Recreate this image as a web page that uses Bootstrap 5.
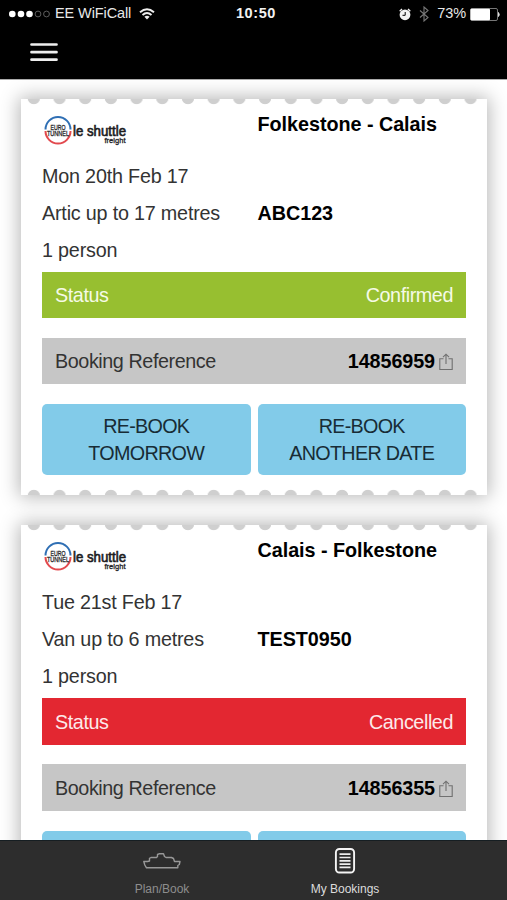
<!DOCTYPE html>
<html lang="en">
<head>
<meta charset="utf-8">
<meta name="viewport" content="width=device-width, initial-scale=1">
<title>My Bookings</title>
<link rel="stylesheet" href="https://cdn.jsdelivr.net/npm/bootstrap@5.3.0/dist/css/bootstrap.min.css">
<style>
body{font-family:"Liberation Sans",Arial,sans-serif;font-size:19.75px;letter-spacing:-.2px;color:#333}
svg{display:block;flex:none}
.topbar{height:79px;background:#000}
.statusline{height:28px;font-size:14.5px;letter-spacing:-.1px;padding:0 7px 0 9px;color:#e8e8e8}
.statusline>div{flex:1 1 0}
.statusline>.clock{flex:none;font-weight:700;letter-spacing:.6px;color:#f2f2f2;padding-left:3px}
.menu-btn{margin:14px 0 0 30px}
.screen{border-top:1px solid #aaa;background:#fff;padding:18.5px 20px 0 21px}
.ticket{position:relative;height:396.5px;margin-bottom:30px;padding:7px 21px 0;background:#fff;box-shadow:0 0 18px 2px rgba(0,0,0,.29)}
.ticket::before,.ticket::after{content:"";position:absolute;left:0;right:0;height:6px;background:radial-gradient(circle at 50% -1px,#cfcfcf 5.8px,transparent 6.6px) 0 0/25.7px 6px repeat-x}
.ticket::before{top:0}
.ticket::after{bottom:0;transform:scaleY(-1)}
.pair{display:grid;grid-template-columns:1fr 1fr;column-gap:7px;line-height:37px}
.pair-head{height:52px}
.person-row{margin-bottom:3px}
.strong-ink{font-weight:700;color:#000;letter-spacing:-.03px}
.brandmark{margin:10px 0 0 2px}
.strip{height:46.5px;padding:3px 13px 0;letter-spacing:-.42px}
.strip .strong-ink{letter-spacing:-.08px}
.strip-green{background:#97bf30;color:#f5fae6}
.strip-red{background:#e32731;color:#fdeaea}
.strip-grey{background:#c6c6c6}
.strip+.strip{margin-top:19.5px}
.actions{margin-top:20px}
.btn-sky,.btn-sky:hover{background:#82cbe9;color:#182c35;border:0;border-radius:5px;height:70.5px;padding:1px 0 0;font-size:inherit;line-height:27px;letter-spacing:-.7px}
.tabs{height:60px;background:#2d2d2d;border-top:1px solid #161e22;font-size:12px;letter-spacing:0}
.tab{width:183px;color:#8d8d8d;line-height:16px}
.tab.current{color:#dcdcdc}
.tab svg{height:28px;margin:6px 0 6px}
</style>
<script src="https://cdn.jsdelivr.net/npm/bootstrap@5.3.0/dist/js/bootstrap.bundle.min.js"></script>
</head>
<body>
<svg width="0" height="0" class="position-absolute">
<defs>
<symbol id="brand" viewBox="0 0 84 30">
<path d="M1.500 13.500A12.500 12.500 0 0 1 26.500 13.500" fill="none" stroke="#2f6fb4" stroke-width="2"/>
<path d="M1.500 15A12.500 12.500 0 0 0 26.500 15" fill="none" stroke="#e2494e" stroke-width="2"/>
<g font-family="Liberation Sans,Arial,sans-serif" fill="#1d1d1f" stroke="#1d1d1f" letter-spacing="0">
<text x="6.500" y="13.500" font-size="7.500" stroke-width=".3" textLength="15" lengthAdjust="spacingAndGlyphs">EURO</text>
<text x="3" y="19.500" font-size="7.500" stroke-width=".3" textLength="22" lengthAdjust="spacingAndGlyphs">TUNNEL</text>
<text x="29" y="19.500" font-size="15" stroke-width=".7" textLength="53" lengthAdjust="spacingAndGlyphs">le shuttle</text>
<text x="60.500" y="26.500" font-size="8" stroke-width=".3" textLength="21" lengthAdjust="spacingAndGlyphs">freight</text>
</g>
</symbol>
<symbol id="share" viewBox="0 0 14 18">
<path d="M4.500 5.800H.8V16.500H13.200V5.800H9.500M7 11V1.500M4 4.200L7 1.200L10 4.200" fill="none" stroke="#707070" stroke-width="1.100"/>
</symbol>
</defs>
</svg>
<div class="vh-100 d-flex flex-column overflow-hidden">
<header class="topbar flex-shrink-0">
<div class="statusline d-flex align-items-center">
<div class="d-flex align-items-center">
<svg width="42" height="10" viewBox="0 0 42 10"><g fill="#fff"><circle cx="3.300" cy="5" r="3.300"/><circle cx="12" cy="5" r="3.300"/><circle cx="20.500" cy="5" r="3.300"/></g><g fill="none" stroke="#666" stroke-width=".9"><circle cx="29" cy="5" r="2.900"/><circle cx="37.500" cy="5" r="2.900"/></g></svg>
<span class="ms-1">EE WiFiCall</span>
<svg class="ms-2" width="16" height="12" viewBox="0 0 16 12"><g fill="none" stroke="#eee" stroke-width="1.900"><path d="M1 4.300Q8-2 15 4.300"/><path d="M3.500 7Q8 3 12.500 7"/></g><path d="M5.400 8.800Q8 6.800 10.600 8.800L8 11.600Z" fill="#eee"/></svg>
</div>
<div class="clock">10:50</div>
<div class="d-flex align-items-center justify-content-end">
<svg width="14" height="13" viewBox="0 0 14 13"><circle cx="8" cy="6.800" r="5.400" fill="#f2f2f2"/><path d="M2.700 3.200L5 1M13.300 3.200L11 1" stroke="#f2f2f2" stroke-width="1.400"/><path d="M8.200 4V7.300H5.500" fill="none" stroke="#000" stroke-width="1"/></svg>
<svg class="mx-2" width="10" height="16" viewBox="0 0 10 16"><path d="M1 4.500L9 11.500L5 15V1L9 4.500L1 11.500" fill="none" stroke="#777" stroke-width="1.100"/></svg>
<span>73%</span>
<svg class="ms-1" width="30" height="13" viewBox="0 0 30 13"><rect x=".5" y=".5" width="27" height="12" rx="1.500" fill="none" stroke="#777"/><rect x=".5" y=".8" width="19.500" height="11.400" rx="1" fill="#fff"/><path d="M28.500 4.500Q30 6.500 28.500 8.500Z" fill="#ddd" stroke="#ddd"/></svg>
</div>
</div>
<svg class="menu-btn" width="28" height="20" viewBox="0 0 28 20"><path d="M1.500 2.500H26.500M1.500 10.200H26.500M1.500 17.700H26.500" stroke="#eee" stroke-width="2.700" stroke-linecap="round"/></svg>
</header>
<main class="screen flex-grow-1 overflow-hidden">
<article class="ticket">
<div class="pair pair-head"><svg class="brandmark" width="84" height="30"><use href="#brand"/></svg><span class="strong-ink">Folkestone - Calais</span></div>
<div class="pair"><span>Mon 20th Feb 17</span></div>
<div class="pair"><span>Artic up to 17 metres</span><span class="strong-ink">ABC123</span></div>
<div class="pair person-row"><span>1 person</span></div>
<div class="strip strip-green d-flex align-items-center justify-content-between"><span>Status</span><span>Confirmed</span></div>
<div class="strip strip-grey d-flex align-items-center"><span class="me-auto">Booking Reference</span><span class="strong-ink">14856959</span><svg class="ms-1" width="14" height="18"><use href="#share"/></svg></div>
<div class="pair actions"><button class="btn btn-sky">RE-BOOK<br>TOMORROW</button><button class="btn btn-sky">RE-BOOK<br>ANOTHER DATE</button></div>
</article>
<article class="ticket">
<div class="pair pair-head"><svg class="brandmark" width="84" height="30"><use href="#brand"/></svg><span class="strong-ink">Calais - Folkestone</span></div>
<div class="pair"><span>Tue 21st Feb 17</span></div>
<div class="pair"><span>Van up to 6 metres</span><span class="strong-ink">TEST0950</span></div>
<div class="pair person-row"><span>1 person</span></div>
<div class="strip strip-red d-flex align-items-center justify-content-between"><span>Status</span><span>Cancelled</span></div>
<div class="strip strip-grey d-flex align-items-center"><span class="me-auto">Booking Reference</span><span class="strong-ink">14856355</span><svg class="ms-1" width="14" height="18"><use href="#share"/></svg></div>
<div class="pair actions"><button class="btn btn-sky" aria-label="Re-book tomorrow"></button><button class="btn btn-sky" aria-label="Re-book another date"></button></div>
</article>
</main>
<nav class="tabs flex-shrink-0 d-flex justify-content-center position-relative">
<div class="tab d-flex flex-column align-items-center">
<svg width="38" height="28" viewBox="0 0 38 28"><path d="M.8 14.500H4.500L6.500 14V11.300L8 10.500H13.500L14.500 9.500V7.500L16 6.800H20.500L21.500 9.500L23 10.500H28.500L30.500 11.500L31.500 14.500H37L36.300 17.500L34.800 18.500V20.800H3.500L1.800 18Z" fill="none" stroke="#989898" stroke-width="1.400" stroke-linejoin="round"/></svg>
<span>Plan/Book</span></div>
<div class="tab current d-flex flex-column align-items-center">
<svg width="22" height="28" viewBox="0 0 22 28"><rect x="1.900" y="2" width="18.200" height="23.500" rx="3.500" fill="none" stroke="#f4f4f4" stroke-width="1.900"/><path d="M5.500 7.200H16.500M5.500 10.500H16.500M5.500 13.800H16.500M5.500 17.100H16.500M5.500 20.400H16.500" stroke="#eee" stroke-width="1.700"/></svg>
<span>My Bookings</span></div>
</nav>
</div>
</body>
</html>
